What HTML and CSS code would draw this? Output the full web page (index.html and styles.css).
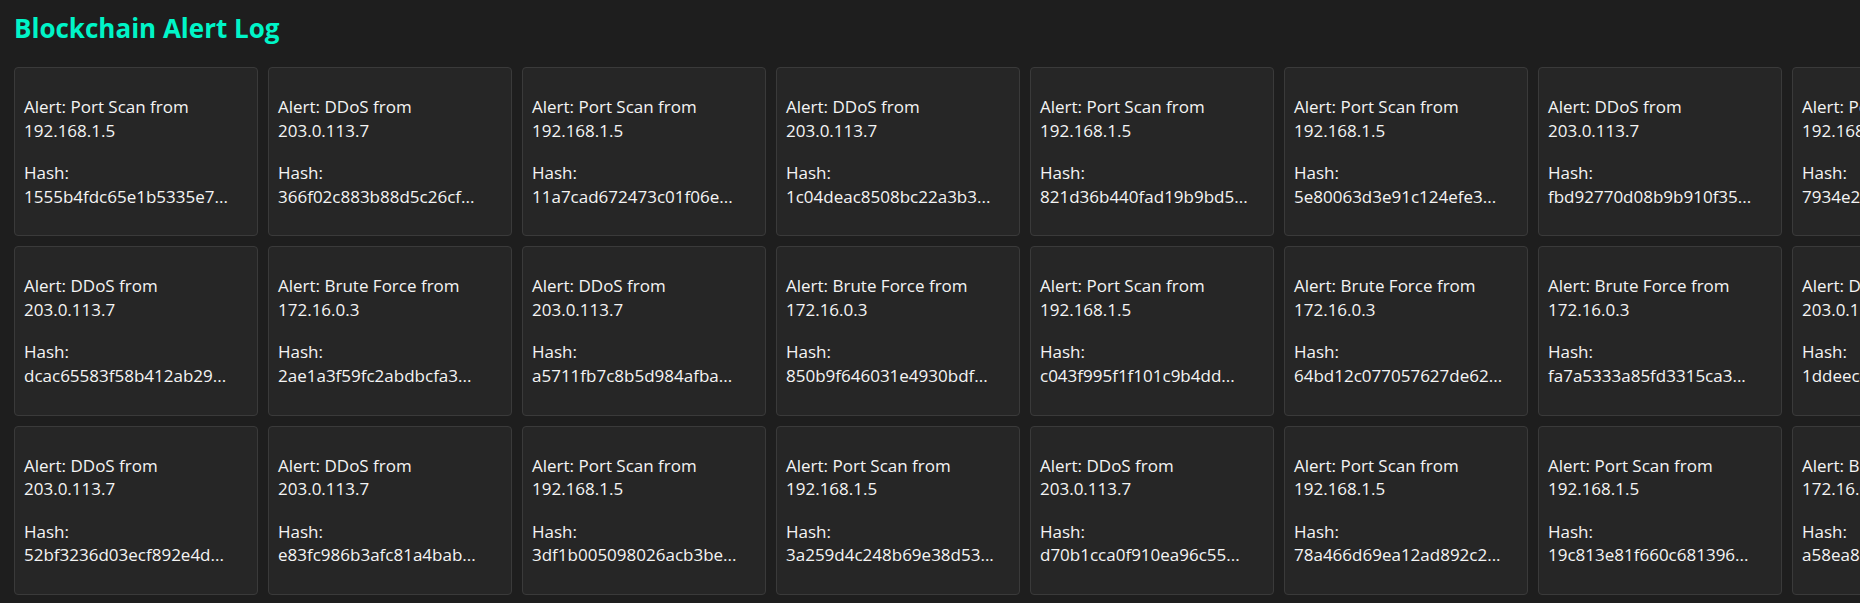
FILE: index.html
```html
<!DOCTYPE html>
<html lang="en">
<head>
<meta charset="utf-8">
<title>Blockchain Alert Log</title>
<link rel="stylesheet" href="styles.css">
</head>
<body>
<h2 class="title">Blockchain Alert Log</h2>
<div class="log">
  <div class="card"><p>Alert: Port Scan from 192.168.1.5</p><p>Hash: 1555b4fdc65e1b5335e7...</p></div>
  <div class="card"><p>Alert: DDoS from 203.0.113.7</p><p>Hash: 366f02c883b88d5c26cf...</p></div>
  <div class="card"><p>Alert: Port Scan from 192.168.1.5</p><p>Hash: 11a7cad672473c01f06e...</p></div>
  <div class="card"><p>Alert: DDoS from 203.0.113.7</p><p>Hash: 1c04deac8508bc22a3b3...</p></div>
  <div class="card"><p>Alert: Port Scan from 192.168.1.5</p><p>Hash: 821d36b440fad19b9bd5...</p></div>
  <div class="card"><p>Alert: Port Scan from 192.168.1.5</p><p>Hash: 5e80063d3e91c124efe3...</p></div>
  <div class="card"><p>Alert: DDoS from 203.0.113.7</p><p>Hash: fbd92770d08b9b910f35...</p></div>
  <div class="card"><p>Alert: Port Scan from 192.168.1.5</p><p>Hash: 7934e2a61c0d85f3b7e9...</p></div>

  <div class="card"><p>Alert: DDoS from 203.0.113.7</p><p>Hash: dcac65583f58b412ab29...</p></div>
  <div class="card"><p>Alert: Brute Force from 172.16.0.3</p><p>Hash: 2ae1a3f59fc2abdbcfa3...</p></div>
  <div class="card"><p>Alert: DDoS from 203.0.113.7</p><p>Hash: a5711fb7c8b5d984afba...</p></div>
  <div class="card"><p>Alert: Brute Force from 172.16.0.3</p><p>Hash: 850b9f646031e4930bdf...</p></div>
  <div class="card"><p>Alert: Port Scan from 192.168.1.5</p><p>Hash: c043f995f1f101c9b4dd...</p></div>
  <div class="card"><p>Alert: Brute Force from 172.16.0.3</p><p>Hash: 64bd12c077057627de62...</p></div>
  <div class="card"><p>Alert: Brute Force from 172.16.0.3</p><p>Hash: fa7a5333a85fd3315ca3...</p></div>
  <div class="card"><p>Alert: DDoS from 203.0.113.7</p><p>Hash: 1ddeec4b92f07a3c6e18...</p></div>

  <div class="card"><p>Alert: DDoS from 203.0.113.7</p><p>Hash: 52bf3236d03ecf892e4d...</p></div>
  <div class="card"><p>Alert: DDoS from 203.0.113.7</p><p>Hash: e83fc986b3afc81a4bab...</p></div>
  <div class="card"><p>Alert: Port Scan from 192.168.1.5</p><p>Hash: 3df1b005098026acb3be...</p></div>
  <div class="card"><p>Alert: Port Scan from 192.168.1.5</p><p>Hash: 3a259d4c248b69e38d53...</p></div>
  <div class="card"><p>Alert: DDoS from 203.0.113.7</p><p>Hash: d70b1cca0f910ea96c55...</p></div>
  <div class="card"><p>Alert: Port Scan from 192.168.1.5</p><p>Hash: 78a466d69ea12ad892c2...</p></div>
  <div class="card"><p>Alert: Port Scan from 192.168.1.5</p><p>Hash: 19c813e81f660c681396...</p></div>
  <div class="card"><p>Alert: Brute Force from 172.16.0.3</p><p>Hash: a58ea8d7e2c14f096b35...</p></div>
</div>
</body>
</html>
```

FILE: styles.css
```css
html, body {
  overflow: hidden;
}
body {
  margin: 0;
  padding: 12px 14px;
  background: #1e1e1e;
  color: #f4f4f4;
  font-family: "Open Sans", "Noto Sans", sans-serif;
}
.title {
  margin: 0 0 23px;
  font-size: 26px;
  line-height: 32px;
  font-weight: 700;
  color: #00f5c8;
}
.log {
  display: grid;
  grid-template-columns: repeat(8, 244px);
  gap: 10px;
}
.card {
  background: #262626;
  border: 1px solid #3a3a3a;
  border-radius: 4px;
  padding: 8.5px 9px;
}
.card p {
  margin: 18.5px 0;
  font-size: 17px;
  line-height: 23.7px;
}
```
